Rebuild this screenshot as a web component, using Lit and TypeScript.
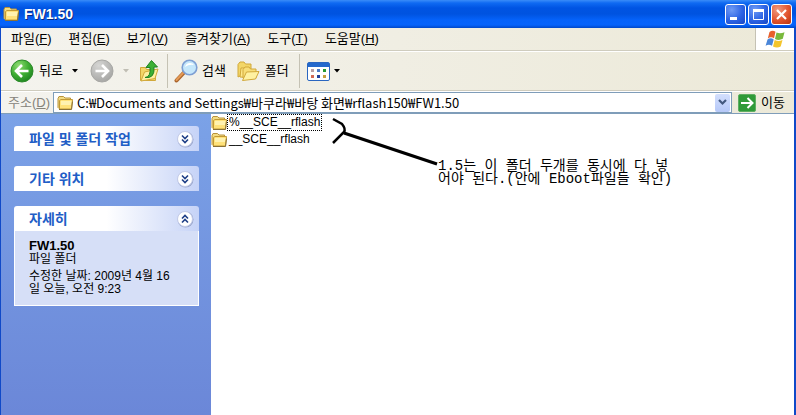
import { LitElement, html, css, svg } from "lit";
import { customElement } from "lit/decorators.js";

const folder = html`<svg class="folder" viewBox="0 0 16 16" width="16" height="16" aria-hidden="true">
  <path d="M1 3.500 2 1.500h4.500L8 3h5.500v10.500H2L1 12.500Z" fill="#f3dc84" stroke="#b8923a" />
  <path d="M2.500 5.500 4 4.500h11.500l-1 9.500h-12Z" fill="#ffe27a" stroke="#c39a35" />
  <path d="M4 6h10.500l-.5 4H4Z" fill="#fff2b0" />
  <path d="M2 14.500h12.500l1-8" fill="none" stroke="#8a7238" />
</svg>`;

const chevrons = (up: boolean) => html`<svg viewBox="0 0 18 18" width="18" height="18" aria-hidden="true">
  <circle cx="9.500" cy="9.500" r="8" fill="#9aa6cc" />
  <circle cx="9" cy="9" r="7.500" fill="#fff" stroke="#c3cbe8" />
  ${up
    ? svg`<path d="m6 8.500 3-3 3 3M6 12.500l3-3 3 3" fill="none" stroke="#1f3f86" stroke-width="1.600" />`
    : svg`<path d="m6 5.500 3 3 3-3M6 9.500l3 3 3-3" fill="none" stroke="#1f3f86" stroke-width="1.600" />`}
</svg>`;

const MENUS = [
  ["파일", "F"],
  ["편집", "E"],
  ["보기", "V"],
  ["즐겨찾기", "A"],
  ["도구", "T"],
  ["도움말", "H"],
];

@customElement("app-root")
export class AppRoot extends LitElement {
  static styles = css`
    :host {
      display: flex;
      flex-direction: column;
      box-sizing: border-box;
      min-height: 100vh;
      font: 13px/16px "Liberation Sans", "Noto Sans CJK KR", sans-serif;
      color: #000;
      background: #fff;
    }
    * { box-sizing: border-box; }
    svg { display: block; flex: none; }
    button {
      font: inherit;
      color: inherit;
      background: none;
      border: 0;
      padding: 0;
      margin: 0;
      display: flex;
      align-items: center;
      white-space: nowrap;
    }
    .title {
      display: flex;
      align-items: center;
      height: 28px;
      padding: 0 4px 0 3px;
      background: linear-gradient(#3a8cf8 0, #0f6af2 3px, #0054e3 8px, #0053e0 14px, #0562fa 20px, #0663fb 25px, #0047c8 28px);
      color: #fff;
    }
    .title h1 {
      flex: 1;
      margin: 0 0 0 5px;
      font-size: 14px;
      line-height: 20px;
      font-weight: bold;
      text-shadow: 1px 1px 0 #0a2a82;
    }
    .controls { display: flex; gap: 2px; }
    .win {
      width: 21px;
      height: 21px;
      border: 1px solid #fff;
      border-radius: 3px;
      justify-content: center;
      background: radial-gradient(circle at 30% 25%, #6f9bf5, #2c63e4 55%, #1746c4);
    }
    .win.close { background: radial-gradient(circle at 30% 25%, #f09a80, #e2552f 55%, #b8330f); }
    .frame {
      flex: 1;
      display: flex;
      flex-direction: column;
      border: solid #1049c8;
      border-width: 0 2px 0 1px;
    }
    .bars { background: linear-gradient(90deg, #f4f3ee, #ece9d8); }
    .menubar {
      display: flex;
      height: 23px;
      border-bottom: 1px solid #cfccbe;
    }
    .menubar nav {
      display: flex;
      flex: 1;
      align-items: center;
      gap: 17px;
      padding-left: 10px;
    }
    .flag {
      width: 39px;
      display: flex;
      align-items: center;
      justify-content: center;
      background: #fff;
      border-left: 1px solid #c5c2b4;
    }
    .toolbar {
      display: flex;
      align-items: center;
      height: 40px;
      padding-left: 9px;
      border-top: 1px solid #fff;
      border-bottom: 1px solid #cfccbe;
    }
    .toolbar button { gap: 5px; }
    .toolbar .back { margin-right: 12px; gap: 9px; }
    .toolbar .back span { margin-left: -4px; }
    .toolbar .forward { gap: 9px; margin-right: 10px; }
    .toolbar .search { margin: 0 11px 0 6px; gap: 4px; }
    .toolbar .folders { margin-right: 10px; }
    .toolbar .views { gap: 4px; margin-left: 7px; }
    .toolbar .up { margin-right: 8px; }
    .sep { width: 1px; height: 34px; background: #c5c2b4; }
    .address {
      display: flex;
      align-items: center;
      height: 22px;
      border-top: 1px solid #fff;
    }
    .address label {
      width: 52px;
      padding-left: 7px;
      color: #85837a;
    }
    .combo {
      flex: 1;
      min-width: 0;
      height: 21px;
      display: flex;
      align-items: center;
      padding: 0 1px 0 3px;
      background: #fff;
      border: 1px solid #7f9db9;
    }
    .combo input {
      flex: 1;
      min-width: 0;
      border: 0;
      padding: 0;
      margin-left: 4px;
      font: 13px/18px "Noto Sans CJK KR", sans-serif;
      height: 18px;
      color: inherit;
      background: none;
      outline: 0;
    }
    .drop {
      width: 15px;
      height: 18px;
      justify-content: center;
      border-radius: 2px;
      background: linear-gradient(#d3dffd, #b5c8f8);
    }
    .go { gap: 5px; padding: 0 9px 0 6px; }
    .body { flex: 1; display: flex; border-top: 1px solid #7f9db9; }
    aside {
      flex: none;
      width: 210px;
      padding: 12px 12px 12px 13px;
      display: flex;
      flex-direction: column;
      gap: 15px;
      background: linear-gradient(#7ba2e7, #6b87d8);
    }
    .panel h2 { margin: 0; font-size: 14px; line-height: 20px; }
    .panel h2 button {
      width: 100%;
      height: 25px;
      padding: 0 5px 0 15px;
      justify-content: space-between;
      color: #215dc6;
      border-radius: 3px 3px 0 0;
      background: linear-gradient(90deg, #fff 50%, #c6d3f7);
    }
    .details {
      padding: 8px 14px 9px;
      border: 1px solid #fff;
      border-top: 0;
      background: #d6dff7;
      font-size: 12px;
      line-height: 13px;
    }
    .details p { margin: 0 0 4px; }
    .details p:last-child { margin: 0; }
    .details strong { display: block; font-size: 13px; line-height: 14px; }
    main { flex: 1; position: relative; background: #fff; }
    .files { list-style: none; margin: 0; padding: 0; }
    .files li { display: flex; align-items: center; height: 17px; }
    .files a {
      color: inherit;
      text-decoration: none;
      font-size: 12px;
      line-height: 15px;
      padding: 0 1px;
      border: 1px dotted transparent;
    }
    .files a.focused { border-color: #000; }
    .pointer { position: absolute; left: 120px; top: 3px; }
    .note {
      position: absolute;
      left: 227px;
      top: 46px;
      margin: 0;
      font: 14px/13px "Liberation Mono", "Noto Sans CJK KR", monospace;
      white-space: nowrap;
    }
  `;

  render() {
    const arrow = (c: string) => html`<svg viewBox="0 0 6 4" width="6" height="4" aria-hidden="true"><path d="M0 0h6L3 3.500Z" fill=${c} /></svg>`;
    return html`
      <header class="title">
        ${folder}
        <h1>FW1.50</h1>
        <div class="controls">
          <button class="win" aria-label="최소화"><svg viewBox="0 0 19 19" width="19" height="19"><path d="M4 12h7v3H4Z" fill="#fff" /></svg></button>
          <button class="win" aria-label="최대화"><svg viewBox="0 0 19 19" width="19" height="19"><path d="M4.500 5v9.500h10V5" fill="none" stroke="#fff" /><path d="M4 4h11v3H4Z" fill="#fff" /></svg></button>
          <button class="win close" aria-label="닫기"><svg viewBox="0 0 19 19" width="19" height="19"><path d="m5 5 9 9m0-9-9 9" stroke="#fff" stroke-width="2.200" /></svg></button>
        </div>
      </header>
      <div class="frame">
        <div class="bars">
          <div class="menubar">
            <nav>${MENUS.map(([name, key]) => html`<button>${name}(<u>${key}</u>)</button>`)}</nav>
            <div class="flag">
              <svg viewBox="0 0 20 18" width="20" height="18" aria-hidden="true">
                <path d="M4.500 2Q7.500-.5 10.500 1.800L9 8.300Q6 6.300 2.800 8.400Z" fill="#e8602c" />
                <path d="M11.500 2.500Q15 4.300 19.500 2.200L17.800 8.800Q14 11 10 9Z" fill="#79b93c" />
                <path d="M2.500 9.500Q5.700 7.300 8.700 9.400L7 15.800Q4 13.600.6 15.700Z" fill="#4a86d8" />
                <path d="M9.700 10Q13.500 12 17.500 10L15.700 16.500Q12 18.500 8 16.500Z" fill="#f4c52c" />
              </svg>
            </div>
          </div>
          <div class="toolbar">
            <button class="back">
              <svg viewBox="0 0 24 24" width="24" height="24" aria-hidden="true">
                <defs><radialGradient id="g" cx=".35" cy=".25" r=".8"><stop offset="0" stop-color="#8fdc72" /><stop offset=".55" stop-color="#3fae33" /><stop offset="1" stop-color="#1e8420" /></radialGradient></defs>
                <circle cx="12" cy="12" r="11" fill="url(#g)" stroke="#2d8a2a" />
                <path d="M18.500 12H6.500M12 6l-6 6 6 6" fill="none" stroke="#fff" stroke-width="2.600" />
              </svg>
              <span>뒤로</span>${arrow("#000")}
            </button>
            <button class="forward" aria-label="앞으로">
              <svg viewBox="0 0 24 24" width="24" height="24" aria-hidden="true">
                <defs><radialGradient id="s" cx=".35" cy=".25" r=".8"><stop offset="0" stop-color="#d6d6d4" /><stop offset="1" stop-color="#a5a5a3" /></radialGradient></defs>
                <circle cx="12" cy="12" r="11" fill="url(#s)" stroke="#a8a8a5" />
                <path d="M5.500 12h12M12 6l6 6-6 6" fill="none" stroke="#fff" stroke-width="2.600" />
              </svg>
              ${arrow("#c0beb4")}
            </button>
            <button class="up" aria-label="위로">
              <svg viewBox="0 0 20 24" width="20" height="24" aria-hidden="true">
                <path d="M1.500 8.500h5l1 2h9v11h-15Z" fill="#f3d667" stroke="#d1a83a" />
                <path d="m2 22 3.500-9 13.500-3-3 9.500Z" fill="#fff0a0" stroke="#d1a83a" />
                <path d="M6 18.500Q12 18 11 8.500H7L12.500 1.500 18.500 8h-3.500Q16 20 6 18.500Z" fill="#3cb034" stroke="#1f8122" />
              </svg>
            </button>
            <span class="sep"></span>
            <button class="search">
              <svg viewBox="0 0 24 24" width="24" height="24" aria-hidden="true">
                <path d="m2.500 21.500 7.500-8" stroke="#a9642d" stroke-width="4" stroke-linecap="round" />
                <path d="m2.500 21 7-7.500" stroke="#e59a55" stroke-width="2" stroke-linecap="round" />
                <circle cx="15.500" cy="8.500" r="7.300" fill="#c5e7fb" stroke="#7e9fd3" stroke-width="1.600" />
                <path d="M11 8Q12 4 16 4q3 0 4 2-5-1-9 2Z" fill="#fff" />
              </svg>
              검색
            </button>
            <button class="folders">
              <svg viewBox="0 0 23 22" width="23" height="22" aria-hidden="true">
                <path d="M1 4.500 3 2h4l1.500 2H14v12H3L1 17Z" fill="#f3d667" stroke="#d1a83a" />
                <path d="m3 17 1-9h5l1.500 1.500H18V18Z" fill="#ffe88a" stroke="#d1a83a" />
                <path d="M6 9.500 8 7h4l1.500 2H19v9H6Z" fill="#f8de78" stroke="#d1a83a" />
                <path d="m5.500 20.500 4-8.500 12.500-.5-3.500 7.500Z" fill="#fff1a2" stroke="#d1a83a" />
              </svg>
              폴더
            </button>
            <span class="sep"></span>
            <button class="views" aria-label="보기">
              <svg viewBox="0 0 23 19" width="23" height="19" aria-hidden="true">
                <rect x=".5" y=".5" width="22" height="18" rx="1.500" fill="#fff" stroke="#2a66c0" />
                <path d="M1 1h21v4H1Z" fill="#2368cc" />
                <path d="M4 7h3v3H4Z" fill="#b9a0a4" /><path d="M10 7h3v3h-3Z" fill="#4b7bc8" /><path d="M16 7h3v3h-3Z" fill="#259a32" />
                <path d="M4 13h3v3H4Z" fill="#d36a55" /><path d="M10 13h3v3h-3Z" fill="#24409a" /><path d="M16 13h3v3h-3Z" fill="#c4a040" />
              </svg>
              ${arrow("#000")}
            </button>
          </div>
          <div class="address">
            <label for="path">주소(<u>D</u>)</label>
            <div class="combo">
              ${folder}
              <input id="path" type="text" value="C:₩Documents and Settings₩바쿠라₩바탕 화면₩rflash150₩FW1.50" />
              <button class="drop" aria-label="주소 목록"><svg viewBox="0 0 9 7" width="9" height="7"><path d="m1 1 3.500 3.500L8 1" fill="none" stroke="#43597f" stroke-width="2.200" /></svg></button>
            </div>
            <button class="go">
              <svg viewBox="0 0 18 18" width="18" height="18" aria-hidden="true">
                <rect x=".5" y=".5" width="17" height="17" rx="1.500" fill="#2f9a38" stroke="#5fae62" />
                <path d="M3 9h11M9.500 4l5 5-5 5" fill="none" stroke="#fff" stroke-width="2" />
              </svg>
              이동
            </button>
          </div>
        </div>
        <div class="body">
          <aside>
            <section class="panel"><h2><button>파일 및 폴더 작업 ${chevrons(false)}</button></h2></section>
            <section class="panel"><h2><button>기타 위치 ${chevrons(false)}</button></h2></section>
            <section class="panel">
              <h2><button>자세히 ${chevrons(true)}</button></h2>
              <div class="details">
                <p><strong>FW1.50</strong>파일 폴더</p>
                <p>수정한 날짜: 2009년 4월 16<br />일 오늘, 오전 9:23</p>
              </div>
            </section>
          </aside>
          <main>
            <ul class="files">
              <li>${folder}<a class="focused" href="#">%__SCE__rflash</a></li>
              <li>${folder}<a href="#">__SCE__rflash</a></li>
            </ul>
            <svg class="pointer" viewBox="0 0 110 50" width="110" height="50" aria-hidden="true">
              <path d="m2 2 9 5q4 5 2 8L2 26" fill="none" stroke="#000" stroke-width="2.500" />
              <path d="m13 16 93 31" stroke="#000" stroke-width="3" />
            </svg>
            <p class="note">1.5는 이 폴더 두개를 동시에 다 넣<br />어야 된다.(안에 Eboot파일들 확인)</p>
          </main>
        </div>
      </div>
    `;
  }
}
